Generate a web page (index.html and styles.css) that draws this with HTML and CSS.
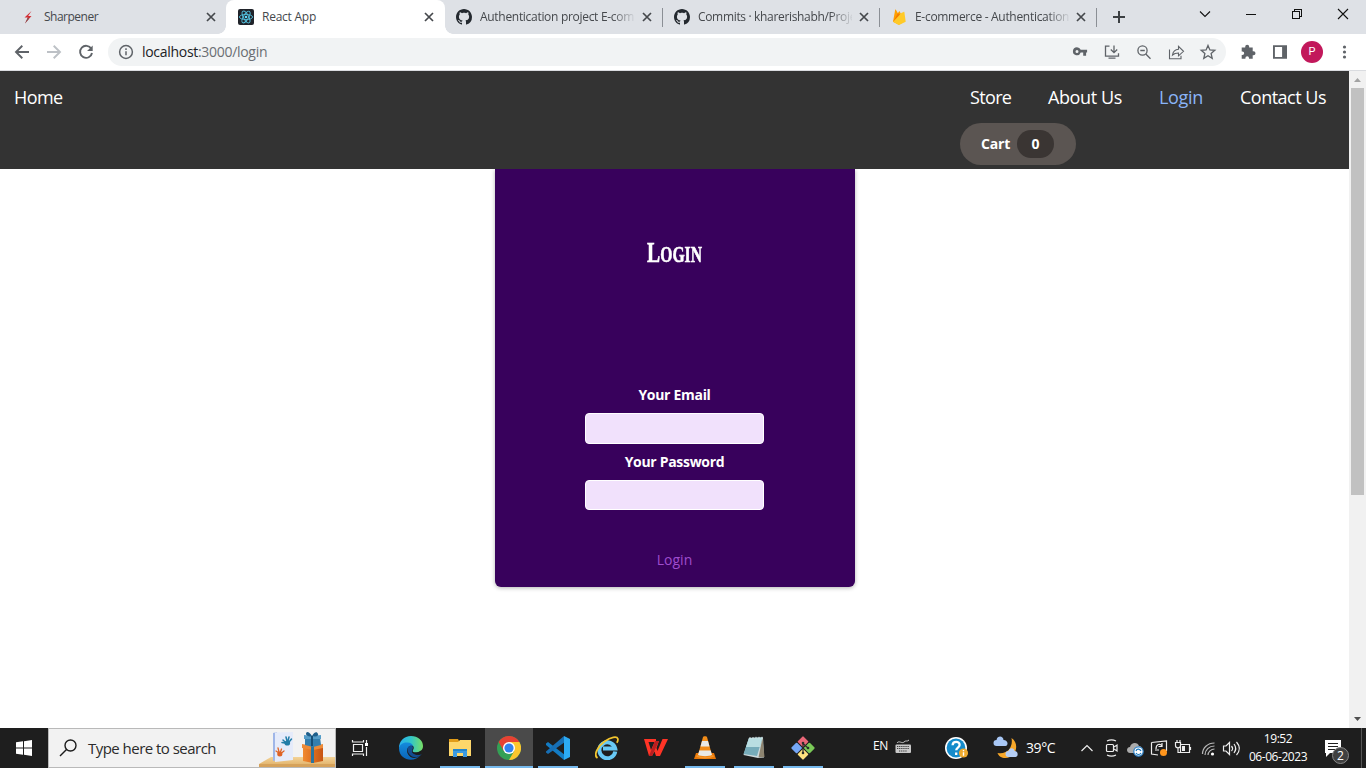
FILE: index.html
```html
<!DOCTYPE html>
<html lang="en">
<head>
<meta charset="utf-8">
<title>React App</title>
<link rel="stylesheet" href="styles.css">
</head>
<body>
<svg class="defs" width="0" height="0">
  <symbol id="x" viewBox="0 0 10 10"><path d="M1 1l8 8M9 1L1 9" stroke="#45484c" stroke-width="1.7"/></symbol>
  <symbol id="github" viewBox="0 0 16 16"><path fill="#24292f" d="M8 0C3.58 0 0 3.58 0 8c0 3.54 2.29 6.53 5.47 7.59.4.07.55-.17.55-.38 0-.19-.01-.82-.01-1.49-2.01.37-2.53-.49-2.69-.94-.09-.23-.48-.94-.82-1.13-.28-.15-.68-.52-.01-.53.63-.01 1.08.58 1.23.82.72 1.21 1.87.87 2.33.66.07-.52.28-.87.51-1.07-1.78-.2-3.64-.89-3.64-3.95 0-.87.31-1.59.82-2.15-.08-.2-.36-1.02.08-2.12 0 0 .67-.21 2.2.82.64-.18 1.32-.27 2-.27s1.36.09 2 .27c1.53-1.04 2.2-.82 2.2-.82.44 1.1.16 1.92.08 2.12.51.56.82 1.27.82 2.15 0 3.07-1.87 3.75-3.65 3.95.29.25.54.73.54 1.48 0 1.07-.01 1.93-.01 2.2 0 .21.15.46.55.38A8.01 8.01 0 0 0 16 8c0-4.42-3.58-8-8-8z"/></symbol>
</svg>
<div class="window">
  <header class="tabs">
    <div class="tab tab-first">
      <svg class="fav" width="16" height="16" viewBox="0 0 16 16"><path d="M11.500 2L4.500 8.500l3.300.1L5 14.500l6.500-7.400-3.300-.1z" fill="#d32f35"/><path d="M7.800 8.600L5 14.500l4-4.700z" fill="#7d5557"/></svg>
      <span class="tab-title t1">Sharpener</span>
      <svg class="close" width="10" height="10"><use href="#x"/></svg>
    </div>
    <div class="tab tab-active">
      <svg class="fav" width="16" height="16" viewBox="0 0 16 16"><rect width="16" height="16" rx="2" fill="#20232a"/><g fill="none" stroke="#53c1de" stroke-width=".9"><ellipse cx="8" cy="8" rx="6.600" ry="2.600"/><ellipse cx="8" cy="8" rx="6.600" ry="2.600" transform="rotate(60 8 8)"/><ellipse cx="8" cy="8" rx="6.600" ry="2.600" transform="rotate(120 8 8)"/></g><circle cx="8" cy="8" r="1.300" fill="#61dafb"/></svg>
      <span class="tab-title t2">React App</span>
      <svg class="close" width="10" height="10"><use href="#x"/></svg>
    </div>
    <div class="tab tab-rest tab-after">
      <svg class="fav" width="16" height="16"><use href="#github"/></svg>
      <span class="tab-title fade t3">Authentication project E-com</span>
      <svg class="close" width="10" height="10"><use href="#x"/></svg>
    </div>
    <div class="tab tab-rest">
      <svg class="fav" width="16" height="16"><use href="#github"/></svg>
      <span class="tab-title fade t4">Commits · kharerishabh/Proje</span>
      <svg class="close" width="10" height="10"><use href="#x"/></svg>
    </div>
    <div class="tab tab-rest">
      <svg class="fav" width="16" height="16" viewBox="0 0 16 16"><path d="M2 12.700L4.200.8c.1-.4.500-.4.700-.1l2 3.600L8 2.400c.2-.3.600-.3.700 0l5 9.800-5.200 3.400c-.4.200-.8.200-1.200 0z" fill="#ffa000"/><path d="M2 12.700l7-7.500 1.700-1.500 2-.8c.3-.2.700 0 .7.300l1.300 9.500-6.200 3c-.4.200-.8.200-1.200 0z" fill="#ffca28"/><path d="M2 12.700L9 5.500 6.900 4.300z" fill="#f57c00"/></svg>
      <span class="tab-title fade t5">E-commerce - Authentication</span>
      <svg class="close" width="10" height="10"><use href="#x"/></svg>
    </div>
    <svg class="plus" width="44" height="34" viewBox="0 0 44 34"><path d="M22 11v12M16 17h12" stroke="#3c4043" stroke-width="2"/></svg>
    <svg class="controls" width="184" height="28" viewBox="0 0 184 28" fill="none" stroke="#111" stroke-width="1.100"><path d="M18 11.500l5 5 5-5"/><path d="M64 14.500h10" shape-rendering="crispEdges"/><path d="M110.500 11.500h7v7h-7zM112.500 11.500v-2h7v7h-2" shape-rendering="crispEdges"/><path d="M156 9l10 10M166 9l-10 10"/></svg>
  </header>

  <div class="toolbar">
    <svg width="108" height="36" viewBox="0 0 108 36" fill="none" stroke="#5f6368" stroke-width="1.900"><path d="M29 18H16.500M22.300 11.800L16 18l6.300 6.200"/><path d="M47 18h12.500M53.700 11.800L60 18l-6.300 6.200" stroke="#bdc1c6"/><path d="M91.300 14.800A6 6 0 1 0 92 19"/><path d="M92.700 11.500v5.600h-5.600z" fill="#5f6368" stroke="none"/></svg>
    <div class="omnibox">
      <svg width="16" height="16" viewBox="0 0 16 16" fill="none" stroke="#5f6368" stroke-width="1.500"><circle cx="8" cy="8" r="6.400"/><path d="M8 7.200v4M8 4.300v1.600"/></svg>
      <span class="url"><b>localhost</b>:3000/login</span>
      <svg class="omni-icons" width="160" height="28" viewBox="0 0 160 28" fill="none" stroke="#5f6368" stroke-width="1.300">
        <path d="M7 9.500a4 4 0 1 0 3.700 5.300h2.500V18h2.900v-3.200h1V12h-6.400A4 4 0 0 0 7 9.500zm0 2.600a1.500 1.500 0 1 1 0 3 1.500 1.500 0 0 1 0-3z" transform="translate(4 -.2)" fill="#5f6368" fill-rule="evenodd" stroke="none"/>
        <path d="M43.500 8.200h-4v10h13v-3M42.500 20.200h7M48 7.500v6.800M44.800 11.500l3.200 3.200 3.200-3.200"/>
        <circle cx="76.500" cy="12.500" r="4.600"/><path d="M79.800 16l4.700 4.700M74.300 12.500h4.500"/>
        <path d="M103.500 11.500v9.200H115v-3M106.500 17c.6-3.600 3-5.500 6-5.700V8.300l5 5-5 4.500V15c-2.500 0-4.500.6-6 2z" stroke-width="1.100"/>
        <path d="M142 7.400l1.900 4.500 4.900.4-3.700 3.200 1.100 4.800-4.200-2.500-4.200 2.500 1.100-4.800-3.700-3.200 4.900-.4z"/>
      </svg>
    </div>
    <svg width="76" height="36" viewBox="0 0 76 36" fill="#5f6368"><path d="M15 14h3.500v-.8a2 2 0 0 1 4 0v.8H26v3.600h.8a2 2 0 0 1 0 4H26v3.600h-3.700v-.8a1.800 1.800 0 0 0-3.600 0v.8H15v-3.700h.7a1.800 1.800 0 0 0 0-3.600H15z" transform="translate(.7 -.4)"/><path d="M47 11.200h14v13.600H47zm1.900 1.900v9.800h7.200v-9.800z" fill-rule="evenodd"/></svg>
    <span class="avatar">P</span>
    <svg class="dots" width="42" height="36" viewBox="0 0 42 36" fill="#5f6368"><circle cx="20.500" cy="13" r="1.600"/><circle cx="20.500" cy="18" r="1.600"/><circle cx="20.500" cy="23" r="1.600"/></svg>
  </div>

  <div class="viewport">
    <div class="page">
      <nav class="navbar">
        <a class="link home">Home</a>
        <div class="nav-right">
          <div class="links">
            <a class="link store">Store</a>
            <a class="link about">About Us</a>
            <a class="link login">Login</a>
            <a class="link contact">Contact Us</a>
          </div>
          <button class="cart"><span>Cart</span><span class="badge">0</span></button>
        </div>
      </nav>
      <main class="card">
        <h1>Login</h1>
        <form>
          <label class="email">Your Email</label>
          <input type="email">
          <label class="pass">Your Password</label>
          <input class="second" type="password">
          <button class="submit" type="button">Login</button>
        </form>
      </main>
    </div>
    <div class="scrollbar">
      <svg width="17" height="17" viewBox="0 0 17 17"><path d="M5 11l3.500-4 3.500 4z" fill="#a3a3a3"/></svg>
      <div class="thumb"></div>
      <svg class="down" width="17" height="17" viewBox="0 0 17 17"><path d="M5 6l3.500 4L12 6z" fill="#505050"/></svg>
    </div>
  </div>

  <footer class="taskbar">
    <svg width="48" height="40" viewBox="0 0 48 40" fill="#fff"><path d="M16 14.300l7-1V19.500h-7zM24 13.200l8-1.200v7.500h-8zM16 20.500h7v6.200l-7-1zM24 20.500h8V28l-8-1.200z"/></svg>
    <div class="search">
      <svg width="39" height="38" viewBox="0 0 39 38" fill="none" stroke="#1c1c1c" stroke-width="1.400"><circle cx="21.500" cy="16.500" r="5.500"/><path d="M17.500 20.500L11 27"/></svg>
      <span class="search-text">Type here to search</span>
      <svg class="gift" width="76" height="38" viewBox="0 0 76 38">
        <defs><linearGradient id="wood" y2="1" x2="0"><stop stop-color="#f3d398"/><stop offset="1" stop-color="#dca85b"/></linearGradient><linearGradient id="bx"><stop stop-color="#f18a30"/><stop offset="1" stop-color="#c75412"/></linearGradient></defs>
        <path d="M12 28h64v11H0v-4z" fill="url(#wood)"/><path d="M0 35h76v4H0z" fill="#d6a25a"/>
        <path d="M14 4l4-1v28l-4 1z" fill="#9fb6e8"/><path d="M16 3.500L34 3v28l-18 2z" fill="#e5ebfa"/>
        <g stroke="#217da8" stroke-width="1.500" stroke-linecap="round"><path d="M27 14l-3-3M28 12l-1-4M29 12l1-4M30 13l2.500-3M26 14l-3-.5"/></g><ellipse cx="28.300" cy="14" rx="2.800" ry="2.600" fill="#217da8"/>
        <g stroke="#df6325" stroke-width="1.300" stroke-linecap="round"><path d="M20 24l-3-2M20 23l-1-4M21.500 23l1-3M22.500 24l2.500-2"/></g><ellipse cx="20.800" cy="25" rx="2.600" ry="2.500" fill="#df6325"/>
        <path d="M44 17h20v15l-10 2-10-2z" fill="url(#bx)"/><path d="M43 15l11 2 10-2v4l-10 2-11-2z" fill="#ed8b38"/><path d="M52 17h3v17h-3z" fill="#2b759f"/>
        <path d="M46 8h15l1 8-8 2-8-2z" fill="#347faf"/><path d="M45 6l8 1 9-1v4H45z" fill="#559dc8"/><path d="M53 7c-3-5-6-5-6-2 0 2 4 3 6 2 4 1 7 0 6-2-1-3-4-2-6 2z" fill="#1e5f8b"/><path d="M52 7h2v10h-2z" fill="#174e75"/>
      </svg>
    </div>
    <svg width="50" height="40" viewBox="0 0 50 40" fill="none" stroke="#eee" stroke-width="1.200"><path d="M17.500 16.500h9v7h-9zM16.500 12v2h11v-2M16.500 28v-2h11v2M30.500 12v3M30.500 19v9"/><path d="M29 15h3v3h-3z" fill="#fff" stroke="none"/></svg>

    <div class="apps">
      <div class="app"><svg width="24" height="24" viewBox="0 0 24 24"><defs><linearGradient id="eg"><stop stop-color="#27aff0"/><stop offset=".5" stop-color="#32c6c8"/><stop offset="1" stop-color="#78df65"/></linearGradient><linearGradient id="eb" x2="0" y2="1"><stop stop-color="#148bdd"/><stop offset="1" stop-color="#0b64b7"/></linearGradient></defs><path d="M0 12C0 5 5 0 12 0c7 0 12 4.500 12 10 0 4-3 6.500-7 6.500-3 0-4-1-3-2.500 2-3 0-5.500-4-5.500C5 8.500 1 11 0 12z" fill="url(#eg)"/><path d="M0 12c.5-3 4-6 8.500-5.500 3 0 5 1.500 5.500 3.500-6-2-8.500 7-2.500 11 3.500 2 7 1 10-2C16 27 0 25 0 12z" fill="url(#eb)"/><path d="M13 10c-5-1.500-6 5-2 9 4 3.500 8 2.500 11.500-.5l.5-.6c-2 1.500-6 1.600-8.500-.2-2-1.400-1.800-3-1-4.500.8-1.300.6-2.500-.5-3.200z" fill="#124d91"/><path d="M13.500 14c-1 2 1 3 3.500 2.500 2-.3 4-.8 5.500-2.500l-.8 3c-3 2-7 1-8.500-.8z" fill="#181c1f"/></svg></div>
      <div class="app open"><svg width="22" height="20" viewBox="0 0 22 20"><path d="M0 1h9l1 2h12v15H0z" fill="#e19c18"/><path d="M0 4h9l2-2h11v16H0z" fill="#fed76b"/><path d="M4 11h14v8h-4v-4H8v4H4z" fill="#3d9be2"/><path d="M4 11h14v2H4z" fill="#2485cc"/></svg></div>
      <div class="app open active"><svg width="24" height="24" viewBox="0 0 24 24"><circle cx="12" cy="12" r="12" fill="#34a055"/><path d="M12 12L1.600 6A12 12 0 0 1 22.400 6z" fill="#e74133"/><path d="M12 6h10.400A12 12 0 0 1 12 24l5.200-9z" fill="#fbc62f"/><path d="M1.600 6l5.200 9 5-9z" fill="#e74133"/><circle cx="12" cy="12" r="6" fill="#fff"/><circle cx="12" cy="12" r="4.600" fill="#3281f0"/></svg></div>
      <div class="app open"><svg width="24" height="24" viewBox="0 0 24 24"><path d="M0 7.500l2-1.500 17 13-1 5L0 9z" fill="#137cc4"/><path d="M0 15.500L18 0l1 6L2 18l-2-1.500z" fill="#176fb5"/><path d="M18 0l6 3v18l-6 3z" fill="#2caaf3"/></svg></div>
      <div class="app"><svg width="24" height="24" viewBox="0 0 24 24"><path d="M20.300 15.500A8 8 0 1 1 20.200 12.500H8" fill="none" stroke="#68c9f5" stroke-width="4"/><path d="M2.500 22C-2 19 3 10 9.500 5.500S22 0 22.800 2.800c.3 1.200-.2 2.800-1 4" fill="none" stroke="#f3c52e" stroke-width="1.800"/></svg></div>
      <div class="app"><svg width="24" height="20" viewBox="0 0 24 20"><path d="M0 1h12v3H4.500l2.500 8 4-9h4l-2.500 7 1 3L18.500 1H24l-8 17h-4l-1.500-4.500L8 18H5z" fill="#ff3426"/><path d="M11 3h4L8 18H5z" fill="#b91e20"/></svg></div>
      <div class="app open"><svg width="22" height="24" viewBox="0 0 22 24"><path d="M2 17h18l2 6H0z" fill="#e87708"/><path d="M9 1c0-1 4-1 4 0l5 18c-2 2-12 2-14 0z" fill="#f28c18"/><path d="M8 5h6l1.500 5.500h-9zM5.300 14.500h11.400L18 19c-3 1.500-11 1.500-14 0z" fill="#e9e9e5"/><path d="M3 19c4 2.500 12 2.500 16 0l1 1.500c-5 2.500-13 2.500-18 0z" fill="#f5972a"/></svg></div>
      <div class="app open"><svg width="24" height="24" viewBox="0 0 24 24"><path d="M7 2l14-.5 1 20-6 .5-14.500-3z" fill="#cdd9dc"/><path d="M7 2l13.500-.5L15 20 1.500 18z" fill="#76acba"/><path d="M7 2l13.500-.5L18 11 4 11z" fill="#b9dee2"/><path d="M20.500 2l2 19-6 .5z" fill="#8d8470"/><path d="M8 1v2M11 1v2M14 .8v2M17 .8v2M20 .8v2" stroke="#d7e2e3"/></svg></div>
      <div class="app open"><svg width="24" height="24" viewBox="0 0 24 24"><g transform="rotate(45 12 12)"><rect x="3.500" y="3.500" width="8" height="8" rx="1" fill="#e96778"/><rect x="12.500" y="3.500" width="8" height="8" rx="1" fill="#7ac957"/><rect x="3.500" y="12.500" width="8" height="8" rx="1" fill="#75a6f6"/><rect x="12.500" y="12.500" width="8" height="8" rx="1" fill="#ffe280"/></g><path d="M12 6v11M12 7.500l5 4.500" stroke="#292d2b" stroke-width="1.200"/><circle cx="12" cy="7" r="1.300" fill="#292d2b"/><circle cx="12" cy="17" r="1.300" fill="#292d2b"/><circle cx="17" cy="12" r="1.300" fill="#292d2b"/></svg></div>
    </div>

    <div class="tray">
      <span class="lang">EN</span>
      <svg width="145" height="40" viewBox="888 728 145 40">
        <rect x="895.500" y="744.500" width="15.500" height="8.500" rx="1" fill="#c9c9c9"/><path d="M897 746.500h12M897 748.500h12M899 751h8" stroke="#3b3b3b" stroke-dasharray="1.300 .8"/><path d="M897 743c2-3 5 1 7-1s3 0 5-2" stroke="#c9c9c9" fill="none"/>
        <circle cx="956" cy="748" r="11" fill="#fff"/><circle cx="956" cy="748" r="9.400" fill="#148bcb"/><path d="M952.600 745.200c.2-4.500 7.200-4.300 7-.2-.1 2.600-3.300 2.500-3.400 5.200M956.200 752.500v2.500" fill="none" stroke="#fff" stroke-width="2.300"/><circle cx="963.500" cy="753" r="4.600" fill="#efaa2e"/><path d="M963.500 750v1.300M963.500 752.300v3.500" stroke="#fff" stroke-width="1.400"/>
        <g transform="translate(1.500 0)"><path d="M1010 738c9 6 4 20-6 20-4 0-7-2-8-5 9 2 16-5 14-15z" fill="#f7a729"/><path d="M995 746a3 3 0 0 1 0-6c1-5 7-4 7 0 5 0 5 6 2 6z" fill="#a8c7f5"/><path d="M1007 757a3 3 0 0 1 0-6c1-4 6-3 6 0 4 0 4 6 1 6z" fill="#b5cef5"/></g>
      </svg>
      <span class="temp">39°C</span>
      <svg width="178" height="40" viewBox="1066 728 178 40" fill="none" stroke="#eee" stroke-width="1.200">
        <path d="M1081.500 751l5.500-5.500 5.500 5.500"/>
        <rect x="1106.500" y="744.500" width="7" height="7" rx="1"/><path d="M1114 747l3-2v6l-3-2M1107 741c3-1.500 6-1.500 9 0M1107 755c3 1.500 6 1.500 9 0"/>
        <path d="M1130 753c-4 0-4-6 0-6 1-5 8-5 9-1 4 0 4 7 1 7z" fill="#aaa" stroke="none"/><circle cx="1138.500" cy="751.500" r="4.700" fill="#fff" stroke="#2e83ca"/><path d="M1136 751c1-3 4-2 5 0M1141 753c-1 2-4 2-5 0" stroke="#1676bd"/>
        <path d="M1151.500 742.500l15-1.500v10M1158 755l-6.500-1v-11.500M1156 749c0-5 4-6 6-3M1162 743v3.500h-3.500M1155 750h4"/><circle cx="1163.500" cy="752.500" r="3.500" fill="#ff951c" stroke="none"/>
        <path d="M1180.500 744.500h9v8h-9zM1190.500 747v3M1175.500 742.500h5v3c0 3-5 3-5 0zM1177 742v-2M1180 742v-2M1178 748v4.500h3"/><path d="M1182 746h3v5h-3z" fill="#eee" stroke="none"/>
        <path d="M1202.500 754c0-6 5-11 12-11M1205 755c0-5 4-9 9.500-9M1208 755c0-3 3-6 6.500-6" opacity=".75"/><circle cx="1212.500" cy="754" r="1.600" fill="#fff" stroke="none"/>
        <path d="M1223.500 746v5h2.500l3.500 3.500v-12l-3.500 3.500zM1231.500 746c1.300 1.500 1.300 3.500 0 5M1234 744c2.300 3 2.300 6 0 9M1236.500 742c3.500 4 3.500 9 0 13"/>
      </svg>
      <div class="clock"><span class="time">19:52</span><span class="date">06-06-2023</span></div>
      <svg class="notify" width="54" height="40" viewBox="1312 728 54 40"><path d="M1325 740h16v13h-11l-4 4v-4h-1z" fill="#fff"/><path d="M1328 743.500h10M1328 746.500h10M1328 749.500h7" stroke="#202020"/><circle cx="1340.500" cy="755.500" r="8" fill="#404040" stroke="#888"/><text class="count" x="1340.500" y="760" text-anchor="middle">2</text><path d="M1361.500 728v40" stroke="#555"/></svg>
    </div>
  </footer>
</div>
</body>
</html>
```

FILE: styles.css
```css
* { box-sizing: border-box; }
body { margin: 0; overflow: hidden; font-family: "Open Sans", "Noto Sans", sans-serif; background: #fff; }
svg { display: block; flex: none; }
.defs { position: absolute; }
.window { width: 1366px; height: 768px; display: flex; flex-direction: column; }

/* browser tabs */
.tabs { height: 34px; background: #dee1e6; display: flex; flex: none; }
.tab { display: flex; align-items: center; height: 34px; padding-right: 11px; flex: none; }
.tab-first { width: 226px; padding-left: 20px; padding-right: 10px; background: radial-gradient(circle at 0 0, #dee1e6 7.500px, #fff 8px) 100% 100% / 8px 8px no-repeat; }
.tab-active { width: 219px; padding-left: 12px; background: #fff; border-radius: 8px 8px 0 0; }
.tab-rest { width: 217px; padding-left: 11px; background: linear-gradient(#8b8f95, #8b8f95) 100% 8px / 1px 19px no-repeat; }
.tab-after { width: 218px; background: linear-gradient(#8b8f95, #8b8f95) 100% 8px / 1px 19px no-repeat, radial-gradient(circle at 100% 0, #dee1e6 7.500px, #fff 8px) 0 100% / 8px 8px no-repeat; }
.tab-title { margin-left: 8px; font-size: 12px; line-height: 18px; color: #45484c; white-space: nowrap; flex: none; }
.fade { width: 154px; -webkit-mask-image: linear-gradient(90deg, #000 132px, transparent 156px); mask-image: linear-gradient(90deg, #000 132px, transparent 156px); }
.close { margin-left: auto; }
.t1 { letter-spacing: -.5px; }
.t2 { letter-spacing: -.25px; }
.t3 { letter-spacing: -.3px; }
.t4 { letter-spacing: -.33px; }
.t5 { letter-spacing: -.3px; }
.controls { margin-left: 41px; }

/* address bar */
.toolbar { height: 37px; padding-bottom: 1px; border-bottom: 1px solid #dadce0; display: flex; align-items: center; flex: none; background: #fff; }
.omnibox { width: 1118px; height: 28px; margin-top: 1px; padding-left: 10px; border-radius: 14px; background: #f1f3f4; display: flex; align-items: center; flex: none; }
.url { margin-left: 8px; font-size: 14px; line-height: 20px; letter-spacing: -.3px; color: #6a6e73; }
.url b { font-weight: 400; color: #202124; }
.omni-icons { margin-left: auto; }
.avatar { width: 22px; height: 22px; margin-left: -1px; border-radius: 50%; background: #c2185b; color: #fff; font: 11px/22px Roboto, sans-serif; text-align: center; flex: none; }
.dots { margin-left: 1px; }

/* page */
.viewport { height: 657px; display: flex; flex: none; }
.page { width: 1349px; }
.navbar { position: relative; height: 98px; padding-left: 14px; display: flex; justify-content: space-between; background: #333; }
.link { font-size: 18px; line-height: 27px; padding-top: 13px; color: #fff; white-space: nowrap; letter-spacing: -.4px; }
.nav-right { width: 389px; }
.links { display: flex; padding-left: 10px; height: 52px; }
.home { letter-spacing: -.6px; }
.store { width: 78px; letter-spacing: -.65px; }
.about { width: 111px; }
.login { width: 81px; color: #8ab4f8; letter-spacing: -.3px; }
.contact { letter-spacing: -.5px; }
.cart { width: 116px; height: 42px; border: 0; padding: 0 0 0 21px; border-radius: 21px; background: #5b5552; color: #fff; font: 700 14px/28px "Open Sans", sans-serif; display: flex; align-items: center; gap: 7px; letter-spacing: -.2px; }
.cart > span:first-child { width: 29px; }
.badge { width: 37px; height: 28px; border-radius: 14px; background: #3a3533; text-align: center; }

/* login card */
.card { width: 360px; height: 418px; margin-left: 495px; padding: 68px 1px 0 0; background: #38015c; border-radius: 0 0 6px 6px; box-shadow: 0 1px 4px rgba(0, 0, 0, .3); color: #fff; text-align: center; }
h1 { margin: 0; height: 146px; font: 700 23px/30px "Liberation Serif", serif; text-transform: uppercase; -webkit-text-stroke: .6px #fff; transform: scaleX(.68); }
h1::first-letter { font-size: 29px; }
form { display: flex; flex-direction: column; align-items: center; }
label { height: 30px; font-size: 14px; font-weight: 700; line-height: 24px; letter-spacing: -.3px; }
input { width: 179px; height: 31px; margin: 0 0 6px; border: 1px solid #fff; border-radius: 4px; background: #f1e1fc; }
input.second { height: 30px; margin: 0; }
.submit { margin-top: 38px; padding: 0; border: 0; background: none; color: #9f4cce; font: 14px/24px "Open Sans", sans-serif; }

.scrollbar { width: 17px; background: #f1f1f1; display: flex; flex-direction: column; align-items: center; }
.thumb { width: 13px; height: 407px; background: #c1c1c1; }
.down { margin-top: auto; }

/* taskbar */
.taskbar { height: 40px; background: #1e1e1e; display: flex; flex: none; }
.search { width: 288px; height: 40px; border: 1px solid #b9b9b9; background: #f2f2f2; display: flex; align-items: center; flex: none; }
.search-text { font-size: 15px; letter-spacing: -.53px; color: #2b2b2b; white-space: nowrap; }
.gift { margin-left: auto; }
.apps { display: flex; gap: 1px; margin-left: 1px; flex: none; }
.app { width: 48px; height: 40px; display: flex; align-items: center; justify-content: center; }
.open { background: linear-gradient(#76b9ed, #76b9ed) 50% 100% / 40px 2px no-repeat; }
.active { background: linear-gradient(#76b9ed, #76b9ed) 50% 100% / 48px 2px no-repeat #4a4a4a; }
.tray { display: flex; margin-left: 46px; color: #fff; flex: none; }
.lang { width: 15px; font-size: 12px; line-height: 36px; letter-spacing: -.3px; }
.temp { width: 33px; margin-left: -7px; font-size: 14px; line-height: 40px; letter-spacing: -.4px; white-space: nowrap; }
.tray > .temp + svg { margin-left: 7px; }
.clock { width: 68px; display: flex; flex-direction: column; align-items: center; font-size: 12px; line-height: 18px; padding-top: 2px; white-space: nowrap; letter-spacing: -.45px; }
.count { font: 12px "Open Sans", sans-serif; fill: #fff; }
```
